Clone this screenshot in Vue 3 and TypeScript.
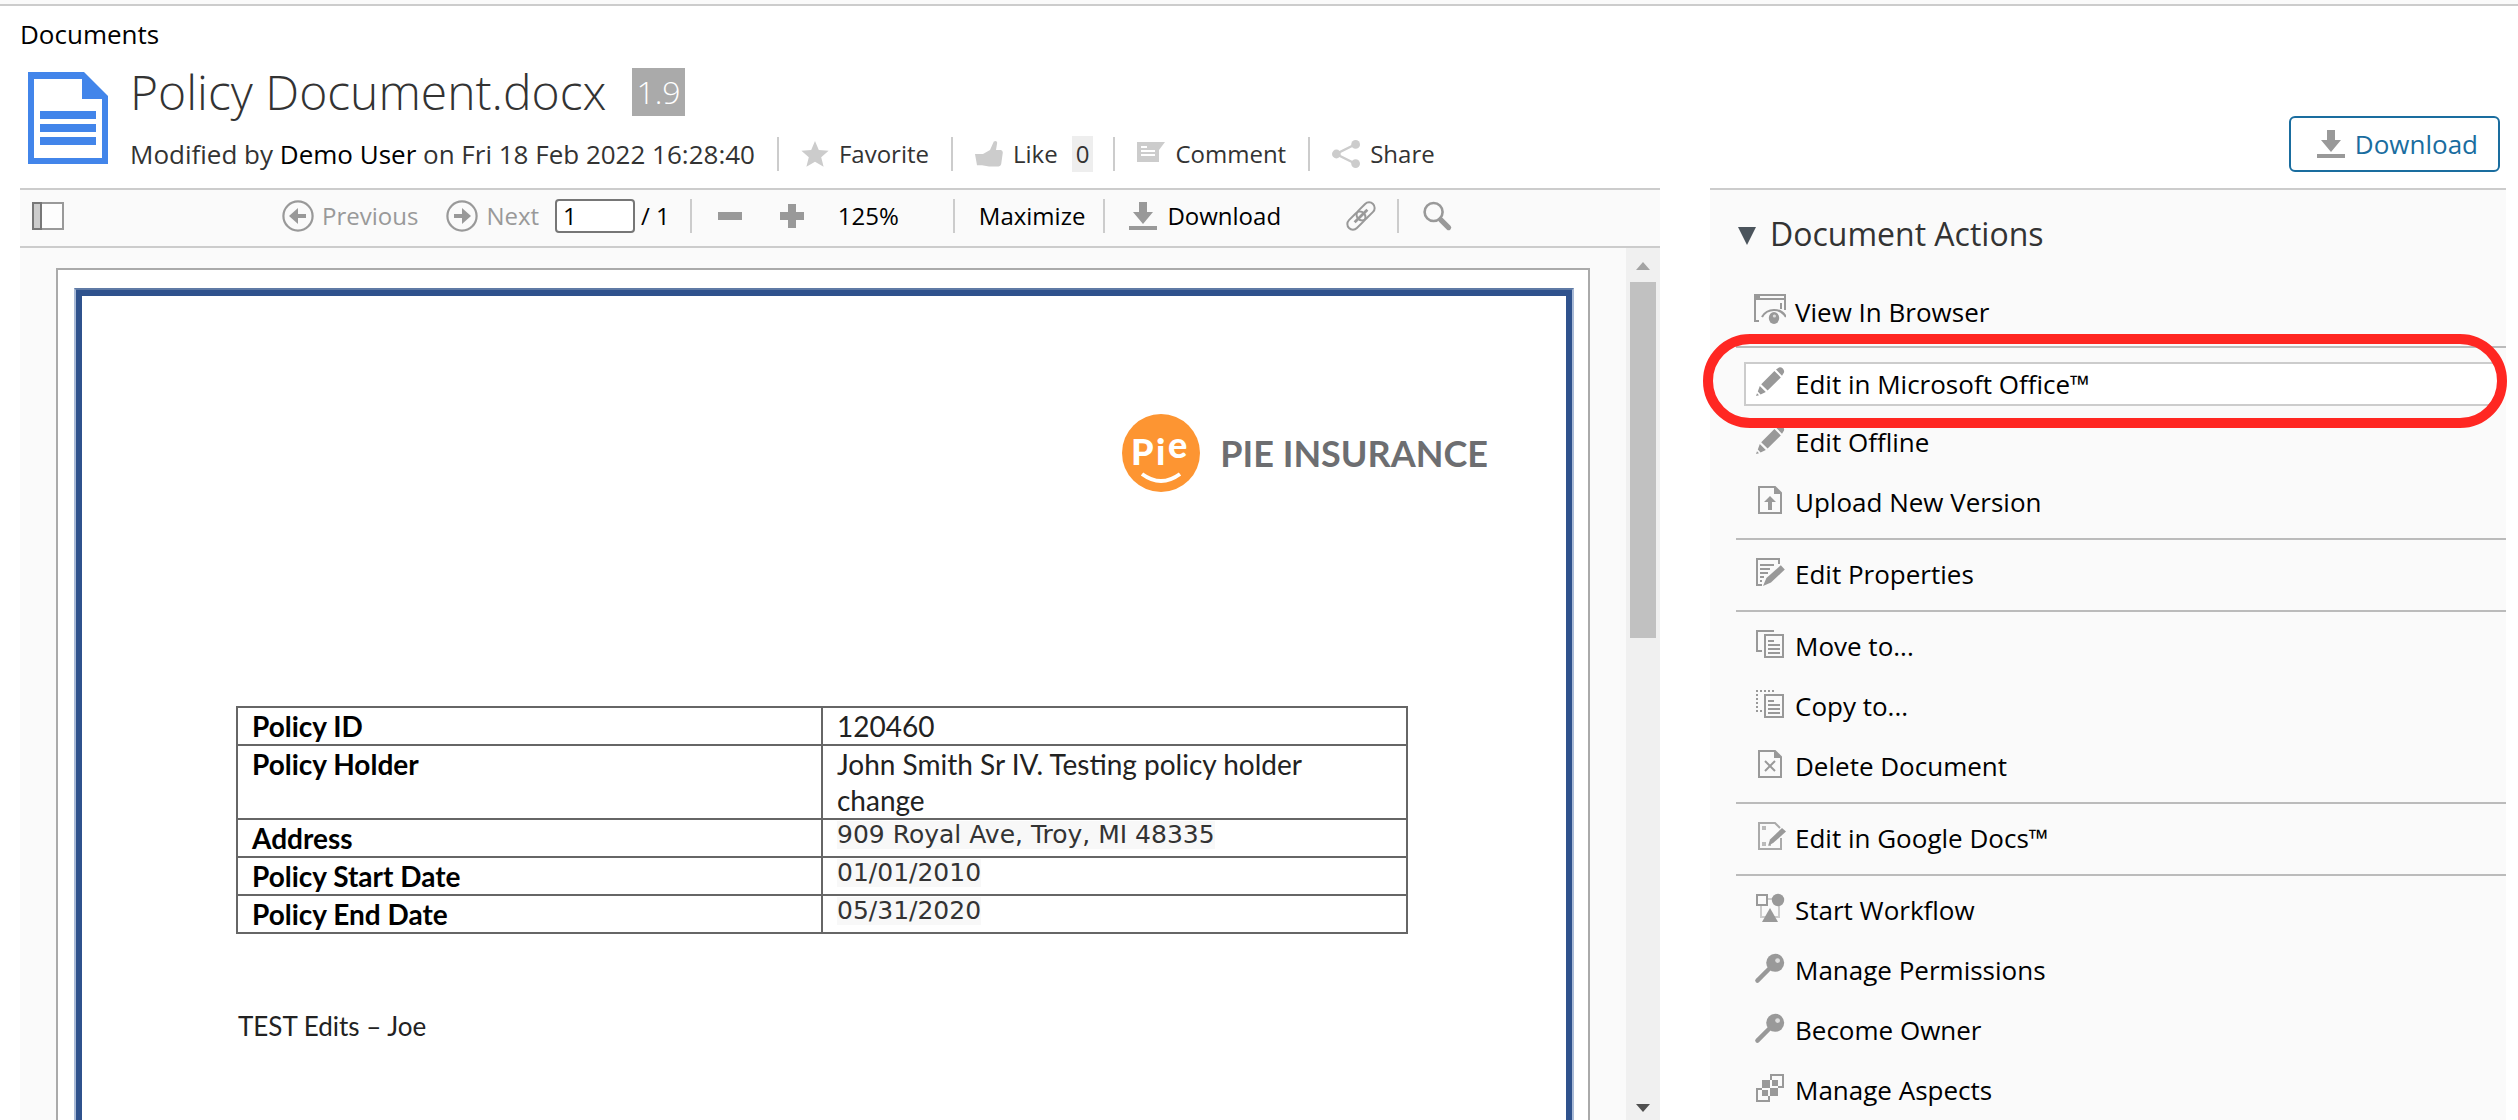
<script setup lang="ts">
import { ref } from 'vue'

interface Action {
  label: string
  icon: string
  active?: boolean
}

const pageNumber = ref('1')

const actionGroups: Action[][] = [
  [{ label: 'View In Browser', icon: 'view' }],
  [
    { label: 'Edit in Microsoft Office™', icon: 'pencil', active: true },
    { label: 'Edit Offline', icon: 'pencil' },
    { label: 'Upload New Version', icon: 'upload' },
  ],
  [{ label: 'Edit Properties', icon: 'properties' }],
  [
    { label: 'Move to...', icon: 'move' },
    { label: 'Copy to...', icon: 'copy' },
    { label: 'Delete Document', icon: 'delete' },
  ],
  [{ label: 'Edit in Google Docs™', icon: 'google' }],
  [
    { label: 'Start Workflow', icon: 'workflow' },
    { label: 'Manage Permissions', icon: 'key' },
    { label: 'Become Owner', icon: 'key' },
    { label: 'Manage Aspects', icon: 'aspects' },
  ],
]

const policyRows = [
  { name: 'Policy ID', value: '120460', field: false },
  { name: 'Policy Holder', value: 'John Smith Sr IV. Testing policy holder change', field: false },
  { name: 'Address', value: '909 Royal Ave, Troy, MI 48335', field: true },
  { name: 'Policy Start Date', value: '01/01/2010', field: true },
  { name: 'Policy End Date', value: '05/31/2020', field: true },
]
</script>

<template>
  <svg class="sprite" aria-hidden="true">
    <symbol id="view" viewBox="0 0 16 16">
      <path d="M0 0h16v3H0zM3 1v1h12V1z" fill="#999" fill-rule="evenodd" />
      <path d="M.5 3v10.500h2M15.500 3v5M13.500 4.500v3" fill="none" stroke="#999" />
      <path d="M4 11.500q2-3.500 6-3.500t6 3.500" fill="none" stroke="#999" stroke-width="1.100" />
      <ellipse cx="10" cy="12" rx="2.600" ry="3" fill="#999" />
      <circle cx="10.200" cy="11" r=".8" fill="#ddd" />
    </symbol>
    <symbol id="pencil" viewBox="0 0 16 16">
      <path d="M11 1.800 12.500.7q1-.3 1.900.6t.6 2L14 4.900zM10.200 2.500 13.400 5.700 6.800 12.300 3.600 9.100zM2.900 10 5.900 13 3.300 14.200 1.900 12.800zM1.500 13.600 2.500 14.600 1 15z" fill="#999" />
    </symbol>
    <symbol id="upload" viewBox="0 0 16 16">
      <path d="M2.500 1.500h8l3 3v10h-11z" fill="none" stroke="#999" />
      <path d="M10 1l4 4h-4zM8 6l3 3H9v4H7V9H5z" fill="#999" />
    </symbol>
    <symbol id="properties" viewBox="0 0 16 16">
      <path d="M12.500 4V1.500h-11v13H4M3 4.500h7M3 6.500h5M3 8.500h4M3 10.500h2M3 12.500h1" fill="none" stroke="#999" />
      <path d="M13.400 4.600 15.400 6.800 8.500 13.200 4.500 15 6.200 11z" fill="#999" />
    </symbol>
    <symbol id="move" viewBox="0 0 16 16">
      <path d="M10 1.500H1.500v10H4M5.500 3.500h9v11h-9zM7 6.500h3M7 8.500h6M7 10.500h6M7 12.500h6" fill="none" stroke="#999" />
    </symbol>
    <symbol id="copy" viewBox="0 0 16 16">
      <path d="M5.500 3.500h9v11h-9zM7 6.500h3M7 8.500h6M7 10.500h6M7 12.500h6" fill="none" stroke="#999" />
      <path d="M1 1.500h9M1.500 3v9M3 11.500h2" fill="none" stroke="#999" stroke-dasharray="1 1" />
    </symbol>
    <symbol id="delete" viewBox="0 0 16 16">
      <path d="M2.500 1.500h8l3 3v10h-11zM5.500 6.500l5 5M10.500 6.500l-5 5" fill="none" stroke="#999" />
      <path d="M10 1l4 4h-4z" fill="#999" />
    </symbol>
    <symbol id="google" viewBox="0 0 16 16">
      <path d="M13.500 9v5.500h-11v-13h8l2.500 2.500" fill="none" stroke="#aaa" />
      <path d="M4 3h2v2H4zM4 11h2v2H4zM7.500 12h1v1h-1z" fill="#bbb" />
      <path d="M14 4l2 1.800-6.300 5.600L7 13l1-3.200z" fill="#999" />
    </symbol>
    <symbol id="workflow" viewBox="0 0 16 16">
      <path d="M7 3.500h4M3.500 7v5.500h3M12.500 6v6.500h-3" fill="none" stroke="#ccc" />
      <path d="M1.500 1.500h5v5h-5z" fill="none" stroke="#999" />
      <circle cx="12" cy="4" r="3.100" fill="#999" />
      <path d="M8 8l4 7H4z" fill="#999" />
    </symbol>
    <symbol id="key" viewBox="0 0 16 16">
      <path d="M8.500 7.500 1.700 14.300" stroke="#999" stroke-width="2.200" stroke-linecap="round" />
      <circle cx="10.600" cy="5.400" r="4.500" fill="#999" />
      <circle cx="11.800" cy="4.300" r="1.200" fill="#ddd" />
    </symbol>
    <symbol id="aspects" viewBox="0 0 16 16">
      <path d="M8.500 4V1.500h6v6H12M4 8.500H1.500v6h6V12" fill="none" stroke="#999" />
      <path d="M4 4h4v4H4zM9 4h3v3H9zM4 9h3v3H4zM8 8h4v4H8z" fill="#999" />
    </symbol>
    <symbol id="download" viewBox="0 0 14 14">
      <path d="M5 0h4v5h3L7 11 2 5h3zM0 12h14v2H0z" fill="#999" />
    </symbol>
  </svg>

  <div class="share">
    <div class="topbar"></div>
    <nav class="breadcrumb" aria-label="Breadcrumb"><a href="#">Documents</a></nav>

    <header class="node">
      <svg class="node-icon" viewBox="0 0 80 92" aria-hidden="true">
        <path d="M0 0h56l24 24v68H0z" fill="#4285ea" />
        <path d="M6 7h48v20h20v59H6z" fill="#fff" />
        <path d="M12 39h56v8H12zM12 52h56v8H12zM12 65h56v8H12z" fill="#4285ea" />
      </svg>
      <div class="node-text">
        <h1>Policy Document.docx <span class="version">1.9</span></h1>
        <div class="meta">
          <span class="modified">Modified by <a href="#">Demo User</a> on Fri 18 Feb 2022 16:28:40</span>
          <button type="button" class="social">
            <svg viewBox="0 0 14 14"><path d="M7 .5l1.900 4.500 4.900.4-3.700 3.200 1.200 4.800L7 10.900l-4.300 2.500 1.200-4.800L.2 5.400l4.900-.4z" fill="#ccc" /></svg>
            Favorite
          </button>
          <button type="button" class="social">
            <svg viewBox="0 0 14 14"><path d="M7.500 5 9.400.8q1.500-.8 1.700.6L10.500 5H13q1.200.4.8 2l-.7 5q-.4 1.300-2 1.300H7L3.500 12.600H1L0 7h4z" fill="#ccc" /></svg>
            Like
          </button>
          <span class="count">0</span>
          <button type="button" class="social">
            <svg viewBox="0 0 14 14"><path d="M0 1h14l-3 4v6H0zM2 3v1h3V3zM2 5v1h7V5zM2 7v1h7V7z" fill="#ccc" fill-rule="evenodd" /></svg>
            Comment
          </button>
          <button type="button" class="social">
            <svg viewBox="0 0 14 14"><path d="M12 2 2 7l10 5" fill="none" stroke="#ccc" stroke-width="1.200" /><circle cx="11.800" cy="2.200" r="2.200" fill="#ccc" /><circle cx="2.200" cy="7" r="2.200" fill="#ccc" /><circle cx="11.800" cy="11.800" r="2.200" fill="#ccc" /></svg>
            Share
          </button>
        </div>
      </div>
      <button type="button" class="download">
        <svg><use href="#download" /></svg>Download
      </button>
    </header>

    <main class="columns">
      <section class="preview" aria-label="Preview">
        <div class="toolbar">
          <button type="button" class="sidebar-toggle" aria-label="Toggle sidebar">
            <svg viewBox="0 0 16 14"><path d="M.5.500h15v13H.5z" fill="#fdfdfd" stroke="#999" /><path d="M.5.500h4v13h-4z" fill="#ccc" stroke="#777" /></svg>
          </button>
          <button type="button" class="step previous">
            <svg viewBox="0 0 16 16"><circle cx="8" cy="8" r="7.300" fill="none" stroke="#999" stroke-width="1.100" /><path d="M3.500 8 8 4v3h4v2H8v3z" fill="#999" /></svg>Previous
          </button>
          <button type="button" class="step next">
            <svg viewBox="0 0 16 16"><circle cx="8" cy="8" r="7.300" fill="none" stroke="#999" stroke-width="1.100" /><path d="M12.500 8 8 4v3H4v2h4v3z" fill="#999" /></svg>Next
          </button>
          <input v-model="pageNumber" type="text" aria-label="Page number" />
          <span class="pages">/ 1</span>
          <span class="sep"></span>
          <button type="button" class="zoom" aria-label="Zoom out"><svg viewBox="0 0 12 12"><path d="M0 4h12v4H0z" fill="#999" /></svg></button>
          <button type="button" class="zoom" aria-label="Zoom in"><svg viewBox="0 0 12 12"><path d="M4 0h4v4h4v4H8v4H4V8H0V4h4z" fill="#999" /></svg></button>
          <span class="scale">125%</span>
          <span class="sep"></span>
          <button type="button" class="maximize">Maximize</button>
          <span class="sep"></span>
          <button type="button" class="save"><svg><use href="#download" /></svg>Download</button>
          <button type="button" class="tool" aria-label="Link">
            <svg viewBox="0 0 16 16"><g fill="none" stroke="#999" transform="rotate(45 8 8)"><rect x="5.200" y="-.5" width="5.600" height="10.500" rx="2.800" /><rect x="5.200" y="6" width="5.600" height="10.500" rx="2.800" /><path d="M8 3.500v9" stroke-width="1.400" /></g></svg>
          </button>
          <span class="sep"></span>
          <button type="button" class="tool search" aria-label="Search">
            <svg viewBox="0 0 16 16"><circle cx="6.300" cy="6" r="4.500" fill="none" stroke="#999" stroke-width="1.300" /><path d="M9.800 9.800l4 4" stroke="#999" stroke-width="2.600" stroke-linecap="round" /></svg>
          </button>
        </div>

        <div class="viewer">
          <div class="canvas">
            <article class="sheet">
              <div class="frame">
                <div class="frame-line">
                  <div class="brand">
                    <svg viewBox="0 0 78 78" aria-hidden="true">
                      <circle cx="39" cy="39" r="39" fill="#fd9532" />
                      <text x="9" y="51" class="logo-text">P</text>
                      <text x="34" y="51" class="logo-text">i</text>
                      <text x="46" y="44" class="logo-text">e</text>
                      <path d="M20 60q19 14 38 0" fill="none" stroke="#fff" stroke-width="4" />
                    </svg>
                    <span>PIE INSURANCE</span>
                  </div>
                  <table>
                    <tbody>
                      <tr v-for="row in policyRows" :key="row.name" :class="{ field: row.field }">
                        <th scope="row">{{ row.name }}</th>
                        <td><span>{{ row.value }}</span></td>
                      </tr>
                    </tbody>
                  </table>
                  <p>TEST Edits – Joe</p>
                </div>
              </div>
            </article>
          </div>
          <div class="scrollbar" aria-hidden="true">
            <svg viewBox="0 0 14 8"><path d="M7 0l7 8H0z" fill="#a3a3a3" /></svg>
            <div class="track"><div class="thumb"></div></div>
            <svg viewBox="0 0 14 8"><path d="M0 0h14L7 8z" fill="#505050" /></svg>
          </div>
        </div>
      </section>

      <aside class="actions">
        <h2>
          <svg viewBox="0 0 18 18" aria-hidden="true"><path d="M0 0h18L9 18z" fill="#4b545c" /></svg>
          Document Actions
        </h2>
        <ul v-for="(group, index) in actionGroups" :key="index">
          <li v-for="action in group" :key="action.label" :class="{ active: action.active }">
            <a href="#"><svg aria-hidden="true"><use :href="'#' + action.icon" /></svg>{{ action.label }}</a>
            <span v-if="action.active" class="highlight"></span>
          </li>
        </ul>
      </aside>
    </main>
  </div>
</template>

<style>
body {
  margin: 0;
  background: #fff;
}
</style>

<style scoped>
.sprite {
  display: none;
}

.share {
  display: flex;
  flex-direction: column;
  height: 100vh;
  overflow: hidden;
  font-family: 'Open Sans', 'Noto Sans', sans-serif;
  font-size: 26px;
  line-height: 36px;
  color: #333;
}

a {
  color: #000;
  text-decoration: none;
}

button {
  display: flex;
  align-items: center;
  padding: 0;
  border: 0;
  background: none;
  color: inherit;
  font: inherit;
  white-space: nowrap;
}

svg {
  display: block;
  flex: none;
}

.topbar {
  flex: none;
  height: 4px;
  background: #fafafa;
  border-bottom: 2px solid #ccc;
}

.breadcrumb {
  padding: 10px 20px 12px;
}

.node {
  display: flex;
  align-items: flex-start;
  padding: 0 18px 16px 28px;
}

.node-icon {
  width: 80px;
  height: 92px;
  margin-top: 8px;
}

.node-text {
  flex: 1;
  padding-left: 22px;
}

h1 {
  display: flex;
  align-items: center;
  gap: 26px;
  height: 56px;
  margin: 0 0 16px;
  font-size: 48px;
  font-weight: 300;
  line-height: 56px;
}

.version {
  padding: 0 4px;
  background: #aaa;
  color: #fff;
  font-size: 32px;
  line-height: 48px;
}

.meta {
  display: flex;
  align-items: center;
}

.modified {
  margin-right: 22px;
}

.social {
  gap: 10px;
  height: 34px;
  padding: 0 22px;
  border-left: 2px solid #ccc;
  font-size: 24px;
}

.social svg {
  width: 28px;
  height: 28px;
}

.count {
  margin: 0 20px 0 -8px;
  padding: 0 4px;
  background: #eee;
  font-size: 24px;
}

.download {
  gap: 10px;
  height: 56px;
  margin-top: 52px;
  padding: 0 20px 0 26px;
  border: 2px solid #1a6d9f;
  border-radius: 6px;
  background: #fff;
  color: #1a6d9f;
}

.download svg,
.save svg {
  width: 28px;
  height: 28px;
}

.columns {
  flex: 1;
  display: grid;
  grid-template-columns: minmax(0, 410fr) minmax(0, 199fr);
  grid-template-rows: minmax(0, 1fr);
  gap: 50px;
  min-height: 0;
  padding: 0 12px 0 20px;
}

.preview,
.actions {
  border-top: 2px solid #ccc;
  background: #fafafa;
}

.preview {
  display: flex;
  flex-direction: column;
}

.toolbar {
  display: flex;
  align-items: center;
  height: 52px;
  padding: 0 12px 4px;
  border-bottom: 2px solid #ccc;
  color: #000;
  font-size: 24px;
}

.sidebar-toggle svg {
  width: 32px;
  height: 28px;
}

.step {
  gap: 8px;
  color: #999;
}

.step svg,
.tool svg {
  width: 32px;
  height: 32px;
}

.previous {
  margin-left: 218px;
}

.next {
  margin-left: 28px;
}

input {
  box-sizing: border-box;
  width: 80px;
  height: 34px;
  margin: 0 6px 0 16px;
  padding: 0 6px;
  border: 2px solid #767676;
  border-radius: 4px;
  background: #fff;
  color: #000;
  font: inherit;
}

.pages {
  margin-right: 20px;
}

.sep {
  width: 2px;
  height: 34px;
  background: #ccc;
}

.zoom {
  margin-left: 26px;
}

.zoom + .zoom {
  margin-left: 38px;
}

.zoom svg {
  width: 24px;
  height: 24px;
}

.scale {
  margin: 0 54px 0 34px;
}

.maximize {
  margin: 0 18px 0 24px;
}

.save {
  gap: 10px;
  margin: 0 64px 0 24px;
}

.tool {
  margin-right: 20px;
}

.search {
  margin-left: 22px;
}

.viewer {
  flex: 1;
  display: flex;
  min-height: 0;
}

.canvas {
  flex: 1;
  overflow: hidden;
  padding: 20px 36px 0;
}

.sheet {
  box-sizing: border-box;
  aspect-ratio: 17 / 22;
  padding: 18px 14px 18px 16px;
  border: 2px solid #aaa;
  background: #fff;
}

.frame {
  box-sizing: border-box;
  height: 100%;
  border: 2px solid #a9bad6;
  border-top-color: #5f7aa5;
}

.frame-line {
  box-sizing: border-box;
  height: 100%;
  padding: 118px 158px 0 154px;
  border: 6px solid #2f528d;
  color: #000;
  font-family: Lato, sans-serif;
  font-size: 28px;
}

.brand {
  display: flex;
  align-items: center;
  justify-content: flex-end;
  gap: 20px;
  margin: 0 -80px 214px 0;
  color: #6d6e71;
  font-size: 36px;
  font-weight: 700;
}

.brand svg {
  width: 78px;
  height: 78px;
}

.logo-text {
  fill: #fff;
  font-size: 36px;
  font-weight: 900;
}

table {
  width: 100%;
  table-layout: fixed;
  border-collapse: collapse;
}

th,
td {
  height: 36px;
  padding: 0 14px;
  border: 2px solid #666;
  text-align: left;
  vertical-align: top;
}

td,
p {
  color: #222;
}

.field td span {
  display: block;
  width: fit-content;
  margin-top: 1px;
  background: #f8f8f8;
  color: #333;
  font-family: 'DejaVu Sans', sans-serif;
  font-size: 25px;
  line-height: 28px;
}

p {
  margin: 74px 0 0 2px;
  font-size: 26px;
}

.scrollbar {
  display: flex;
  flex-direction: column;
  align-items: center;
  width: 34px;
  padding: 14px 0 8px;
  box-sizing: border-box;
  background: #f0f0f0;
}

.scrollbar svg {
  width: 14px;
  height: 8px;
}

.track {
  flex: 1;
  width: 26px;
  padding: 12px 0;
}

.thumb {
  height: 44%;
  background: #c1c1c1;
}

.actions {
  padding-left: 26px;
}

h2 {
  display: flex;
  align-items: center;
  gap: 14px;
  margin: 0;
  padding: 22px 2px 0;
  font-size: 32px;
  font-weight: 400;
  line-height: 44px;
}

h2 svg {
  width: 18px;
  height: 18px;
  margin-top: 4px;
}

ul {
  margin: 0;
  padding: 6px 6px 4px 8px;
  border-top: 2px solid #bbb;
  list-style: none;
}

h2 + ul {
  padding-top: 28px;
  padding-bottom: 2px;
  border-top: 0;
}

li {
  position: relative;
  padding: 8px 0;
}

li a {
  display: flex;
  align-items: flex-start;
  gap: 9px;
  height: 42px;
  padding: 2px 10px 0;
}

li svg {
  width: 32px;
  height: 32px;
}

.active a {
  height: 38px;
  padding: 2px 8px 0;
  border: 2px solid #ccc;
  background: #fff;
}

.highlight {
  position: absolute;
  inset: -20px -7px -14px -41px;
  z-index: 1;
  border: 10px solid #ff2722;
  border-radius: 48px;
  pointer-events: none;
}
</style>
